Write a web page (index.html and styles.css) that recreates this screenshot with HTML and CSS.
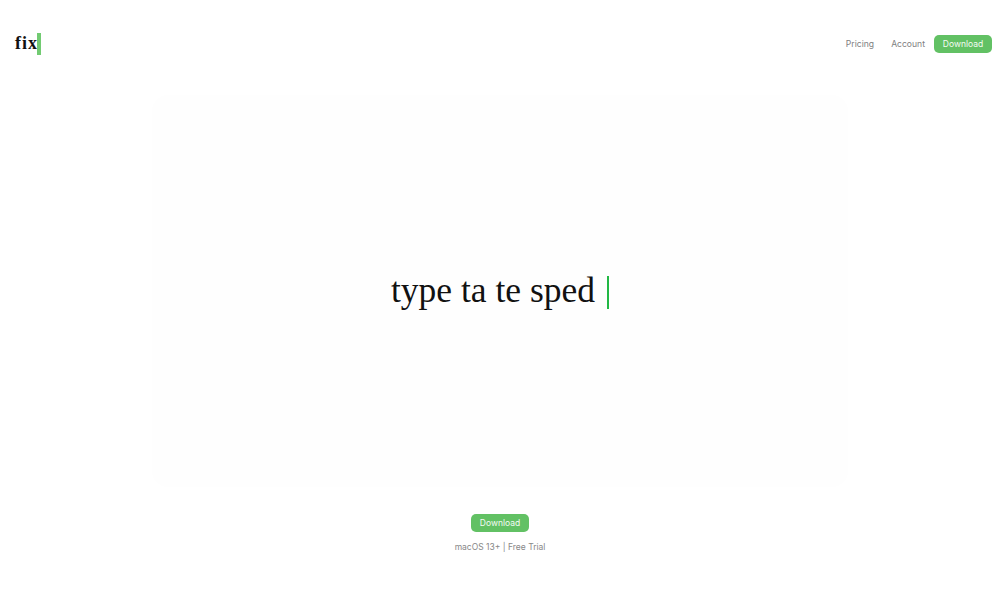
FILE: index.html
```html
<!doctype html>
<html lang="en">
<head>
	<meta charset="UTF-8"/>
	<title>fix</title>
	<link rel="stylesheet" href="styles.css">
</head>
<body>
	<header class="nav">
		<a href="#" class="logo"><span class="logoTxt">fix</span><span class="logoCaret"></span></a>
		<div class="menu">
			<a href="#" class="link">Pricing</a>
			<a href="#" class="link">Account</a>
			<a href="#" class="btn">Download</a>
		</div>
	</header>
	<main class="hero">
		<div class="panel">
			<span class="typed">type ta te sped</span><span class="caret"></span>
		</div>
	</main>
	<div class="cta">
		<a href="#" class="btn">Download</a>
		<p class="note">macOS 13+ | Free Trial</p>
	</div>
</body>
</html>
```

FILE: styles.css
```css
*			{ padding:0; margin:0; box-sizing:border-box; }
html, body	{ height:100%; }
body		{ background:#fff; font-family:"Inter", "Liberation Sans", sans-serif; overflow:hidden; }
a			{ text-decoration:none; }

.nav		{ height:87px; padding:0 8px 0 15px; display:flex; justify-content:space-between; align-items:center; }
.logo		{ display:flex; align-items:center; color:#111; }
.logoTxt	{ font-family:"Liberation Serif", serif; font-weight:bold; font-size:18px; letter-spacing:1px; }
.logoCaret	{ width:4px; height:22px; margin-left:-1px; background:#72cb72; }
.menu		{ display:flex; align-items:center; gap:17px; }
.link		{ font-size:8.6px; color:#808080; }
.menu .btn	{ margin-left:-8px; }

.btn		{ display:block; width:58px; height:18px; line-height:18px; text-align:center; font-size:8.5px; color:#f4fbf4; background:#62c164; border-radius:5px; }

.hero		{ display:flex; justify-content:center; padding-top:8px; }
.panel		{ width:696px; height:392px; background:#fefefe; border-radius:16px; display:flex; justify-content:center; align-items:center; padding-bottom:3px; }
.typed		{ font-family:"Liberation Serif", serif; font-size:35.5px; color:#111; }
.caret		{ width:2px; height:33px; margin:6px 0 0 12px; background:#22b845; }

.cta		{ display:flex; flex-direction:column; align-items:center; padding-top:27px; }
.note		{ margin-top:10px; font-size:8.5px; color:#888; }
```
